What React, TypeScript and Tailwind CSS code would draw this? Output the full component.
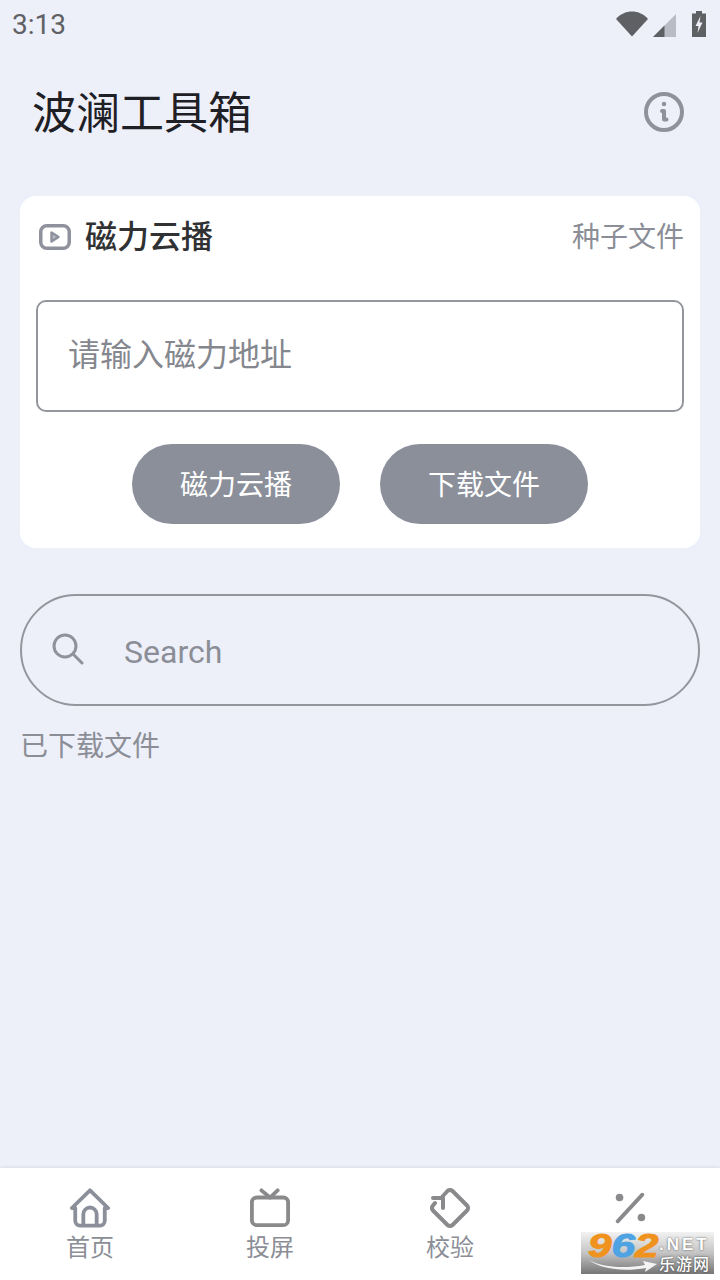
import React from "react";

const cjk = "font-['Roboto','Noto_Sans_CJK_SC',sans-serif]";

const HomeIcon = () => (
  <svg width="40" height="40" viewBox="0 0 42 42" fill="none" stroke="#8b8f9a" strokeWidth="4" strokeLinejoin="round" strokeLinecap="round">
    <path d="M2 21 21 2.500 40 21h-3.500v13.500a5 5 0 0 1-5 5h-21a5 5 0 0 1-5-5V21Z" />
    <path d="M14 39V27.500a7 7 0 0 1 14 0V39" />
  </svg>
);

const TvIcon = () => (
  <svg width="40" height="40" viewBox="0 0 42 42" fill="none" stroke="#8a8a8c" strokeWidth="4" strokeLinejoin="round" strokeLinecap="round">
    <rect x="2" y="10" width="38" height="29" rx="5" />
    <path d="M12 2.500 21 10l8-7.500" />
  </svg>
);

const RotateIcon = () => (
  <svg width="40" height="40" viewBox="0 0 40 40" fill="none" stroke="#8a8a8c" strokeWidth="4" strokeLinejoin="round" strokeLinecap="round">
    <path d="M12 9 17.500 3a3.500 3.500 0 0 1 5 0L37 17.500a3.500 3.500 0 0 1 0 5L22.500 37a3.500 3.500 0 0 1-5 0L3 22.500a3.500 3.500 0 0 1 0-5L5 15" />
    <path d="M3 10h10v10" />
  </svg>
);

const PercentIcon = () => (
  <svg width="40" height="40" viewBox="0 0 42 42" fill="#8a8a8c">
    <path d="M34 7 8 35" stroke="#8a8a8c" strokeWidth="4" strokeLinecap="round" />
    <circle cx="10" cy="10" r="4" />
    <circle cx="33" cy="31" r="4" />
  </svg>
);

const NavItem = ({ icon, label }: { icon: React.ReactNode; label?: string }) => (
  <div className="flex flex-col items-center w-[180px]">
    {icon}
    {label && <span className={`mt-[4px] text-[24px] leading-[32px] text-[#8b8e96] ${cjk}`}>{label}</span>}
  </div>
);

export default function App() {
  return (
    <div className={`w-[720px] h-[1280px] bg-[#edf0f9] flex flex-col relative overflow-hidden ${cjk}`}>
      {/* status bar */}
      <div className="h-[50px] flex items-center justify-between pl-[12px] pr-[14px]">
        <span className="text-[28px] leading-[50px] text-[#5f6165] font-['Roboto',sans-serif]">3:13</span>
        <div className="flex items-end h-[26px] mt-[-3px]">
          <svg width="32" height="26" viewBox="0 0 32 26" fill="#5f6064"><path d="M0 8C4 3 10 0.500 16 0.500S28 3 32 8L16 25.500Z" /></svg>
          <svg className="ml-[5px]" width="23" height="23" viewBox="0 0 24 24"><path d="M24 0V24H0Z" fill="#b9bcc4" /><path d="M12 12V24H0Z" fill="#5f6064" /></svg>
          <svg className="ml-[16px]" width="14" height="26" viewBox="0 0 14 26"><path d="M4 0h6v2.500h4V26H0V2.500h4Z" fill="#5f6064" /><path d="M8.500 5 3.500 15h3l-1 7 5-10.500h-3Z" fill="#edf0f9" /></svg>
        </div>
      </div>

      {/* title */}
      <div className="h-[124px] flex items-center justify-between pl-[32px] pr-[36px]">
        <h1 className="text-[44px] leading-[60px] mt-[3px] font-normal text-[#1f2026]">波澜工具箱</h1>
        <svg width="40" height="40" viewBox="0 0 40 40" fill="none" stroke="#8f929c" strokeWidth="4" strokeLinecap="round" strokeLinejoin="round">
          <circle cx="20" cy="20" r="18" />
          <circle cx="20" cy="12" r="1.500" fill="#8f929c" strokeWidth="1.500" />
          <path d="M18 19h2v8.500h2.500" />
        </svg>
      </div>

      <div className="h-[22px]" />

      {/* card */}
      <div className="mx-[20px] h-[352px] bg-white rounded-[16px] flex flex-col px-[16px]">
        <div className="h-[82px] flex items-center justify-between">
          <div className="flex items-center">
            <svg className="ml-[3px] mt-[-1px]" width="32" height="26" viewBox="0 0 32 26" fill="none" stroke="#8f929c" strokeWidth="3.500">
              <rect x="1.750" y="1.750" width="28.500" height="22.500" rx="6" />
              <path d="M12.500 8.500v9l7-4.500Z" fill="#b9bcc4" strokeWidth="2.500" strokeLinejoin="round" />
            </svg>
            <span className="ml-[14px] text-[32px] leading-[44px] font-medium text-[#303133]">磁力云播</span>
          </div>
          <span className="text-[28px] leading-[40px] mt-[2px] text-[#8b8e96]">种子文件</span>
        </div>
        <div className="mt-[22px] h-[112px] border-2 border-[#94969e] rounded-[10px] flex items-center pl-[30px]">
          <span className="text-[32px] leading-[44px] mt-[-2px] text-[#85878e]">请输入磁力地址</span>
        </div>
        <div className="mt-[32px] flex justify-center gap-[40px]">
          <button className="w-[208px] h-[80px] pt-[3px] rounded-full bg-[#8b8f9a] text-white text-[28px]">磁力云播</button>
          <button className="w-[208px] h-[80px] pt-[3px] rounded-full bg-[#8b8f9a] text-white text-[28px]">下载文件</button>
        </div>
      </div>

      {/* search */}
      <div className="mt-[46px] mx-[20px] h-[112px] border-2 border-[#94969e] rounded-full flex items-center pl-[30px]">
        <svg className="mt-[-2px]" width="32" height="32" viewBox="0 0 32 32" fill="none" stroke="#8f929c" strokeWidth="3" strokeLinecap="round">
          <circle cx="13" cy="13" r="11" />
          <path d="M21 21l9 9" />
        </svg>
        <span className="ml-[40px] mt-[3px] text-[32px] leading-[44px] text-[#8b8e96] font-['Roboto',sans-serif]">Search</span>
      </div>

      <div className="mt-[21px] ml-[20px] text-[28px] leading-[40px] text-[#8b8e96]">已下载文件</div>

      <div className="flex-1" />

      {/* bottom nav */}
      <div className="h-[112px] bg-white shadow-[0_-1px_3px_rgba(0,0,0,0.08)] flex pt-[20px]">
        <NavItem icon={<HomeIcon />} label="首页" />
        <NavItem icon={<TvIcon />} label="投屏" />
        <NavItem icon={<RotateIcon />} label="校验" />
        <NavItem icon={<PercentIcon />} />
      </div>

      {/* watermark */}
      <div className="absolute left-[581px] top-[1232px] w-[133px] h-[42px] bg-gradient-to-b from-[#f2f2f2] via-[#c4c4c4] to-[#767676] flex">
        <div className="w-[78px] pl-[7px]">
          <div className="w-[54px] origin-left scale-x-[1.28] text-[33px] leading-[28px] font-black italic text-[#f0921e] [-webkit-text-stroke:1px_#f0921e] font-['Liberation_Sans',sans-serif]">
            9<span className="text-[#4fa3e3] [-webkit-text-stroke:1px_#4fa3e3]">6</span>2
          </div>
        </div>
        <svg className="absolute left-[8px] top-[26px]" width="68" height="14" viewBox="0 0 68 14" fill="#f4f4f4">
          <path d="M0 2C12 9 34 11 56 7L54 3 68 6 56 14 57 10C34 14 12 11 0 2Z" />
        </svg>
        <div className="flex flex-col items-start">
          <span className="mt-[3px] text-[17px] leading-[20px] font-bold text-white [text-shadow:0_0_2px_#444] font-['Liberation_Sans',sans-serif] tracking-[3px]">.NET</span>
          <span className="text-[16px] leading-[20px] tracking-[1px] font-medium text-white [text-shadow:0_0_2px_#333]">乐游网</span>
        </div>
      </div>
    </div>
  );
}
